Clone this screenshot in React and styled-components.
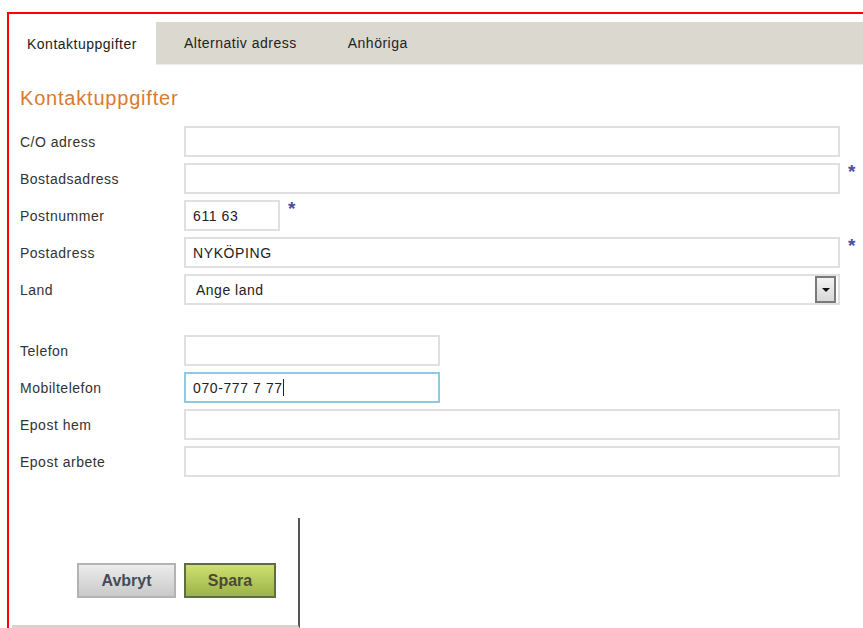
import React, { useState } from 'react';
import styled, { createGlobalStyle } from 'styled-components';

const GlobalStyle = createGlobalStyle`
  html, body {
    margin: 0;
    padding: 0;
    background: #fff;
    overflow: hidden;
  }
  body {
    font-family: "Liberation Sans", Arial, sans-serif;
    color: #333;
  }
`;

const Frame = styled.div`
  margin: 12px 0 0 7px;
  border-top: 2px solid #ff0000;
  border-left: 2px solid #ff0000;
  min-height: 620px;
  box-sizing: border-box;
`;

const TabBar = styled.ul`
  list-style: none;
  margin: 8px 0 0;
  padding: 0;
  display: flex;
  gap: 5px;
  height: 42px;
  background: #dbd8d0;
  border-bottom: 1px solid #eeece7;
`;

const Tab = styled.li`
  display: flex;
  align-items: center;
  padding: ${({ $active }) => ($active ? '0 19px 0 18px' : '0 23px')};
  margin-bottom: ${({ $active }) => ($active ? '-1px' : '0')};
  background: ${({ $active }) => ($active ? '#fff' : 'transparent')};
  font-size: 14px;
  letter-spacing: 0.5px;
  color: #222;
  cursor: pointer;
`;

const Content = styled.div`
  padding: 0 0 0 11px;
`;

const Heading = styled.h2`
  margin: 21px 0 16px;
  font-size: 20px;
  line-height: 24px;
  letter-spacing: 0.8px;
  font-weight: normal;
  color: #d87a30;
`;

const Form = styled.div`
  display: flex;
  flex-direction: column;
  gap: 6px;
`;

const Row = styled.div`
  display: grid;
  grid-template-columns: 164px auto;
  align-items: center;
  margin-top: ${({ $spaced }) => ($spaced ? '24px' : '0')};
`;

const Label = styled.label`
  font-size: 14px;
  letter-spacing: 0.5px;
  color: #333;
`;

const Field = styled.div`
  display: flex;
  align-items: flex-start;
  gap: 8px;
`;

const TextInput = styled.input`
  box-sizing: border-box;
  width: ${({ $width }) => $width}px;
  height: 31px;
  padding: 0 7px;
  border: 2px solid ${({ $focused }) => ($focused ? '#8ccbe0' : '#e0e0e0')};
  background: #fff;
  font-family: "Liberation Sans", Arial, sans-serif;
  font-size: 14px;
  letter-spacing: 0.6px;
  color: #222;
  outline: none;
`;

const Required = styled.span`
  font-size: 19px;
  line-height: 18px;
  font-weight: bold;
  color: #4c4ca6;
`;

const SelectBox = styled.div`
  box-sizing: border-box;
  width: 656px;
  height: 31px;
  display: flex;
  align-items: center;
  justify-content: space-between;
  padding: 0 2px 0 10px;
  border: 2px solid #e0e0e0;
  background: #fff;
  font-size: 14px;
  letter-spacing: 0.5px;
  color: #222;
`;

const SelectArrow = styled.span`
  box-sizing: border-box;
  width: 21px;
  height: 27px;
  display: flex;
  align-items: center;
  justify-content: center;
  border: 2px solid #7a7a7a;
  background: linear-gradient(#f4f4f4, #d8d8d8);

  &::after {
    content: '';
    border-left: 4px solid transparent;
    border-right: 4px solid transparent;
    border-top: 4px solid #111;
  }
`;

const Caret = styled.span`
  position: absolute;
  top: 7px;
  width: 1px;
  height: 17px;
  background: #222;
`;

const InputWrap = styled.div`
  position: relative;
`;

const Footer = styled.div`
  box-sizing: border-box;
  width: 288px;
  height: 111px;
  margin: 41px 0 0 -8px;
  padding: 45px 22px 0 0;
  display: flex;
  justify-content: flex-end;
  align-items: flex-start;
  gap: 8px;
  border-right: 2px solid #555;
  border-bottom: 4px solid #d6d3c9;
`;

const Button = styled.button`
  box-sizing: border-box;
  width: ${({ $width }) => $width}px;
  height: 35px;
  font-family: "Liberation Sans", Arial, sans-serif;
  font-size: 16px;
  font-weight: bold;
  cursor: pointer;
  color: ${({ $primary }) => ($primary ? '#4a4b32' : '#444c5a')};
  border: ${({ $primary }) => ($primary ? '2px solid #5c7038' : '2px solid #b3b3b3')};
  background: ${({ $primary }) =>
    $primary
      ? 'linear-gradient(#cfdf72, #9cb347)'
      : 'linear-gradient(#ececec, #c9c9c9)'};
`;

const fields = [
  { label: 'C/O adress', width: 656 },
  { label: 'Bostadsadress', width: 656, required: true },
  { label: 'Postnummer', width: 96, value: '611 63', required: true },
  { label: 'Postadress', width: 656, value: 'NYKÖPING', required: true },
];

const contactFields = [
  { label: 'Telefon', width: 256 },
  { label: 'Mobiltelefon', width: 256, value: '070-777 7 77', focused: true },
  { label: 'Epost hem', width: 656 },
  { label: 'Epost arbete', width: 656 },
];

const tabs = ['Kontaktuppgifter', 'Alternativ adress', 'Anhöriga'];

const FormRow = ({ field, spaced }) => (
  <Row $spaced={spaced}>
    <Label>{field.label}</Label>
    <Field>
      <InputWrap>
        <TextInput
          $width={field.width}
          $focused={field.focused}
          defaultValue={field.value || ''}
          readOnly
        />
        {field.focused && <Caret style={{ left: 99 }} />}
      </InputWrap>
      {field.required && <Required>*</Required>}
    </Field>
  </Row>
);

const App = () => {
  const [activeTab, setActiveTab] = useState(0);

  return (
    <>
      <GlobalStyle />
      <Frame>
        <TabBar>
          {tabs.map((tab, i) => (
            <Tab key={tab} $active={i === activeTab} onClick={() => setActiveTab(i)}>
              {tab}
            </Tab>
          ))}
        </TabBar>
        <Content>
          <Heading>Kontaktuppgifter</Heading>
          <Form>
            {fields.map((field) => (
              <FormRow key={field.label} field={field} />
            ))}
            <Row>
              <Label>Land</Label>
              <Field>
                <SelectBox>
                  Ange land
                  <SelectArrow />
                </SelectBox>
              </Field>
            </Row>
            {contactFields.map((field, i) => (
              <FormRow key={field.label} field={field} spaced={i === 0} />
            ))}
          </Form>
          <Footer>
            <Button $width={99}>Avbryt</Button>
            <Button $width={92} $primary>
              Spara
            </Button>
          </Footer>
        </Content>
      </Frame>
    </>
  );
};

export default App;
